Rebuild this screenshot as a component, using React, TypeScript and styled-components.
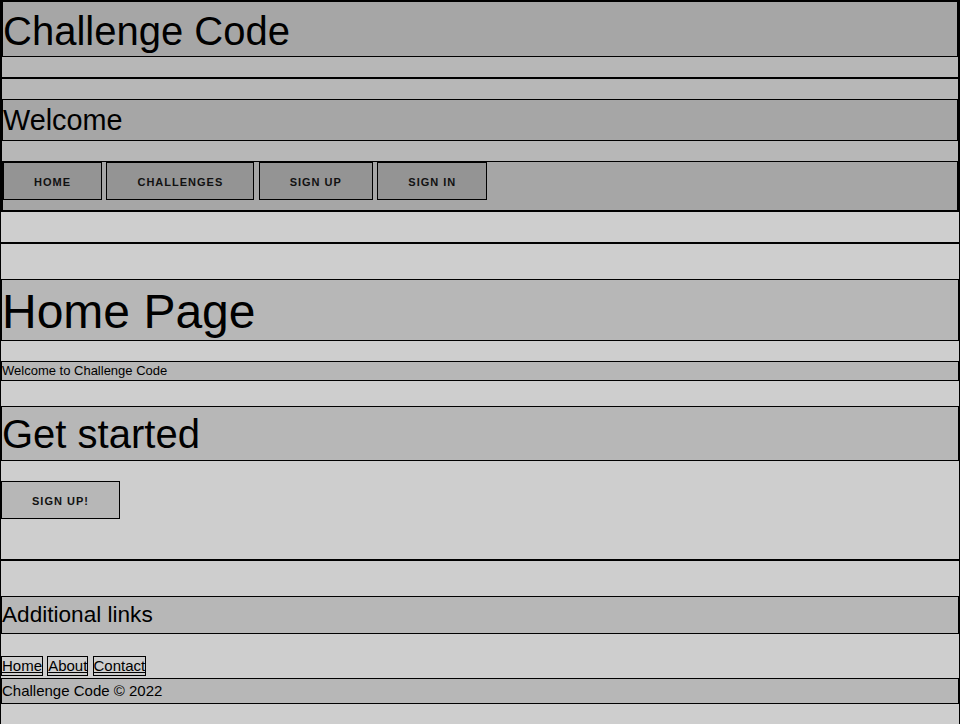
import React from "react";
import styled, { createGlobalStyle } from "styled-components";

const GlobalStyle = createGlobalStyle`
  html, body { margin: 0; padding: 0; }
  body {
    font-family: "Liberation Sans", Arial, Helvetica, sans-serif;
    color: #000;
    background: #cecece;
  }
  *, *::before, *::after { box-sizing: border-box; }
`;

const Page = styled.div`
  width: 960px;
  min-height: 724px;
  background: #cecece;
  border-left: 1px solid #000;
  border-right: 1px solid #000;
`;

const Header = styled.header`
  background: #b7b7b7;
  border: 1px solid #000;
  border-top-width: 2px;
  padding-bottom: 20px;
`;

const SiteTitle = styled.h1`
  margin: 0;
  padding-top: 4px;
  font-size: 40px;
  font-weight: 400;
  line-height: 50px;
  background: #a6a6a6;
  border: 1px solid #000;
  border-top: none;
`;

const TopSection = styled.section`
  background: #b7b7b7;
  border: 1px solid #000;
  padding-top: 20px;
`;

const WelcomeTitle = styled.h2`
  margin: 0 0 20px;
  font-size: 28.8px;
  font-weight: 400;
  line-height: 40px;
  background: #a6a6a6;
  border: 1px solid #000;
`;

const Nav = styled.nav`
  display: flex;
  align-items: flex-start;
  gap: 4.45px;
  padding-bottom: 10px;
  background: #a6a6a6;
  border: 1px solid #000;
`;

const Button = styled.a<{ $bg: string }>`
  display: inline-flex;
  align-items: center;
  justify-content: center;
  height: 38px;
  padding: 1px 30px 0;
  background: ${(p) => p.$bg};
  border: 1px solid #000;
  color: #111;
  font-size: 11px;
  font-weight: 700;
  letter-spacing: 1px;
  text-transform: uppercase;
  text-decoration: none;
  white-space: nowrap;
`;

const Main = styled.main`
  margin-top: 30px;
  border-top: 2px solid #000;
  border-bottom: 1px solid #000;
  padding: 35px 0 40px;
`;

const PageTitle = styled.h1`
  margin: 0 0 20px;
  padding-top: 3px;
  font-size: 48px;
  font-weight: 400;
  line-height: 57px;
  background: #b7b7b7;
  border: 1px solid #000;
`;

const Intro = styled.p`
  margin: 0 0 25px;
  font-size: 13px;
  line-height: 18px;
  background: #b7b7b7;
  border: 1px solid #000;
`;

const SectionTitle = styled.h2`
  margin: 0 0 20px;
  padding-top: 2px;
  font-size: 40px;
  font-weight: 400;
  line-height: 51px;
  background: #b7b7b7;
  border: 1px solid #000;
`;

const Footer = styled.footer`
  border-top: 1px solid #000;
  padding: 35px 0 20px;
`;

const LinksTitle = styled.h3`
  margin: 0;
  font-size: 22.6px;
  font-weight: 400;
  line-height: 36px;
  background: #b7b7b7;
  border: 1px solid #000;
`;

const LinkRow = styled.div`
  display: flex;
  gap: 4.17px;
  margin-top: 22px;
`;

const FooterLink = styled.a`
  display: inline-block;
  font-size: 15px;
  line-height: 18px;
  color: #000;
  text-decoration: underline;
  border: 1px solid #000;
`;

const Copyright = styled.p`
  margin: 2px 0 0;
  font-size: 15px;
  line-height: 24px;
  background: #b7b7b7;
  border: 1px solid #000;
`;

const navItems = ["Home", "Challenges", "Sign up", "Sign in"];
const footerLinks = ["Home", "About", "Contact"];

export default function App() {
  return (
    <>
      <GlobalStyle />
      <Page>
        <Header>
          <SiteTitle>Challenge Code</SiteTitle>
        </Header>
        <TopSection>
          <WelcomeTitle>Welcome</WelcomeTitle>
          <Nav>
            {navItems.map((item) => (
              <Button key={item} $bg="#949494" href="#">
                {item}
              </Button>
            ))}
          </Nav>
        </TopSection>
        <Main>
          <PageTitle>Home Page</PageTitle>
          <Intro>Welcome to Challenge Code</Intro>
          <SectionTitle>Get started</SectionTitle>
          <Button $bg="#b7b7b7" href="#">
            Sign up!
          </Button>
        </Main>
        <Footer>
          <LinksTitle>Additional links</LinksTitle>
          <LinkRow>
            {footerLinks.map((l) => (
              <FooterLink key={l} href="#">
                {l}
              </FooterLink>
            ))}
          </LinkRow>
          <Copyright>Challenge Code © 2022</Copyright>
        </Footer>
      </Page>
    </>
  );
}
